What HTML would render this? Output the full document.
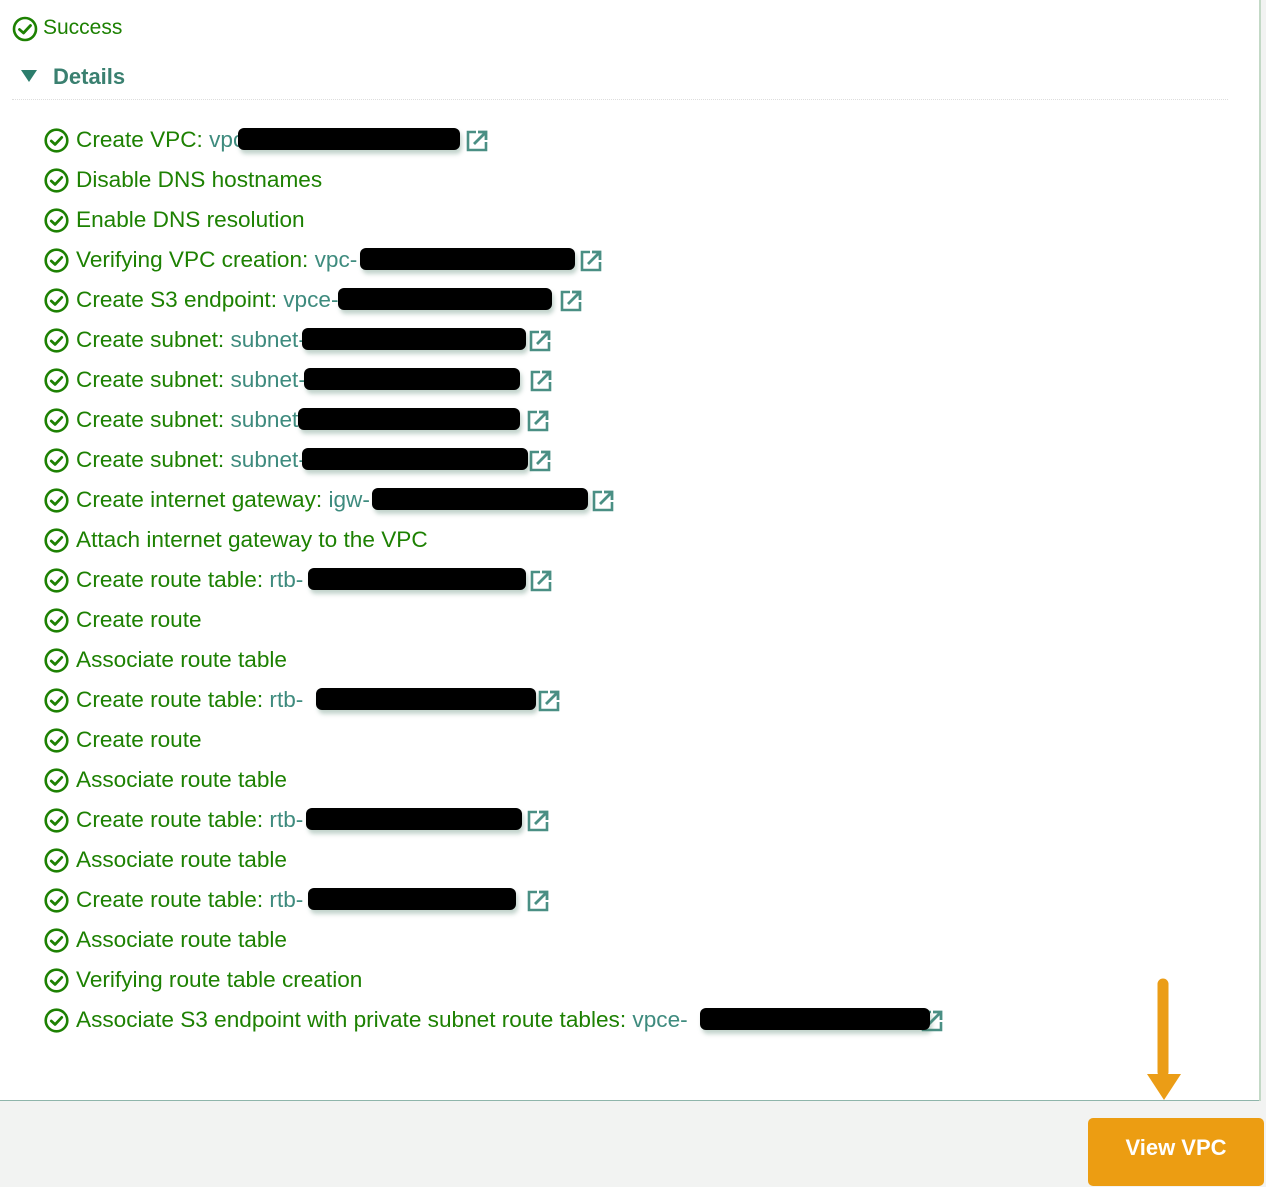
<!DOCTYPE html>
<html><head><meta charset="utf-8"><style>
html,body{margin:0;padding:0;}
body{width:1266px;height:1186px;position:relative;background:#fff;overflow:hidden;font-family:"Liberation Sans",sans-serif;}
.t{position:absolute;left:76px;font-size:22.6px;color:#1d8102;line-height:26px;white-space:nowrap;}
.t span{color:#3e8b7e;}
.ic{position:absolute;left:44px;width:25px;height:25px;}
.bar{position:absolute;height:22px;background:#000;border-radius:6px;box-shadow:2px 4px 4px rgba(80,130,110,0.35);}
.ex{position:absolute;width:22px;height:22px;}
</style></head><body>
<div style="position:absolute;left:0;top:1100px;width:1266px;height:86px;background:#f2f3f2;border-top:1.5px solid #8fb5ab;"></div>
<div style="position:absolute;left:1259px;top:0;width:2px;height:1101px;background:#c3d9c6;"></div>
<div style="position:absolute;left:1261px;top:0;width:5px;height:1101px;background:#f2f3f2;"></div>
<div style="position:absolute;left:12px;top:99px;width:1216px;border-top:1px dotted #ddd;"></div>

<svg style="position:absolute;left:12px;top:16px" width="26" height="26" viewBox="0 0 26 26"><circle cx="13" cy="13" r="11" fill="none" stroke="#1d8102" stroke-width="2.6"/><path d="M7.5 13.5l4 3.5 7-7.5" fill="none" stroke="#1d8102" stroke-width="2.8" stroke-linecap="round" stroke-linejoin="round"/></svg>
<div style="position:absolute;left:43px;top:16px;font-size:21px;color:#1d8102;">Success</div>
<svg style="position:absolute;left:21px;top:70px" width="16" height="12"><path d="M0 0h16L8 12z" fill="#2b7d6c"/></svg>
<div style="position:absolute;left:53px;top:64px;font-size:22px;font-weight:bold;color:#3a8070;">Details</div>

<div id="rows"></div>

<svg style="position:absolute;left:1145px;top:978px" width="40" height="128"><path d="M18 6v88" stroke="#eb9d16" stroke-width="11" stroke-linecap="round"/><path d="M2 96h34l-17 26z" fill="#eb9d16"/></svg>
<div style="position:absolute;left:1088px;top:1118px;width:176px;height:68px;background:#ec9d12;border-radius:5px;"></div>
<div style="position:absolute;left:1088px;top:1135px;width:176px;text-align:center;font-size:22px;font-weight:bold;color:#fff;">View VPC</div>

<script>
const rows=[
["Create VPC: ","vpc",238,460,466],
["Disable DNS hostnames"],
["Enable DNS resolution"],
["Verifying VPC creation: ","vpc-",360,575,580],
["Create S3 endpoint: ","vpce-",338,552,560],
["Create subnet: ","subnet-",302,526,529],
["Create subnet: ","subnet-",304,520,530],
["Create subnet: ","subnet",298,520,527],
["Create subnet: ","subnet-",302,528,529],
["Create internet gateway: ","igw-",372,588,592],
["Attach internet gateway to the VPC"],
["Create route table: ","rtb-",308,526,530],
["Create route"],
["Associate route table"],
["Create route table: ","rtb-",316,536,538],
["Create route"],
["Associate route table"],
["Create route table: ","rtb-",306,522,527],
["Associate route table"],
["Create route table: ","rtb-",308,516,527],
["Associate route table"],
["Verifying route table creation"],
["Associate S3 endpoint with private subnet route tables: ","vpce-",700,930,921]
];
let h="";
rows.forEach((r,i)=>{
 const cy=140+i*40;
 h+=`<svg class="ic" style="top:${cy-12}px" viewBox="0 0 25 25"><circle cx="12.5" cy="12.5" r="10.8" fill="none" stroke="#1d8102" stroke-width="2.6"/><path d="M7.3 13l3.8 3.4 6.6-7" fill="none" stroke="#1d8102" stroke-width="2.8" stroke-linecap="round" stroke-linejoin="round"/></svg>`;
 h+=`<div class="t" style="top:${cy-13}px">${r[0]}${r[1]?'<span>'+r[1]+'</span>':''}</div>`;
 if(r[1]){
  h+=`<svg class="ex" style="left:${r[4]}px;top:${cy-10}px" viewBox="0 0 22 22"><path d="M10 2H2v18h18v-8" fill="none" stroke="#4a8f84" stroke-width="2.6"/><path d="M8 14L19 3M12 2h8v8" fill="none" stroke="#4a8f84" stroke-width="2.8"/></svg>`;
  h+=`<div class="bar" style="left:${r[2]}px;width:${r[3]-r[2]}px;top:${cy-12}px"></div>`;
 }
});
document.getElementById("rows").outerHTML=h;
</script>
</body></html>
